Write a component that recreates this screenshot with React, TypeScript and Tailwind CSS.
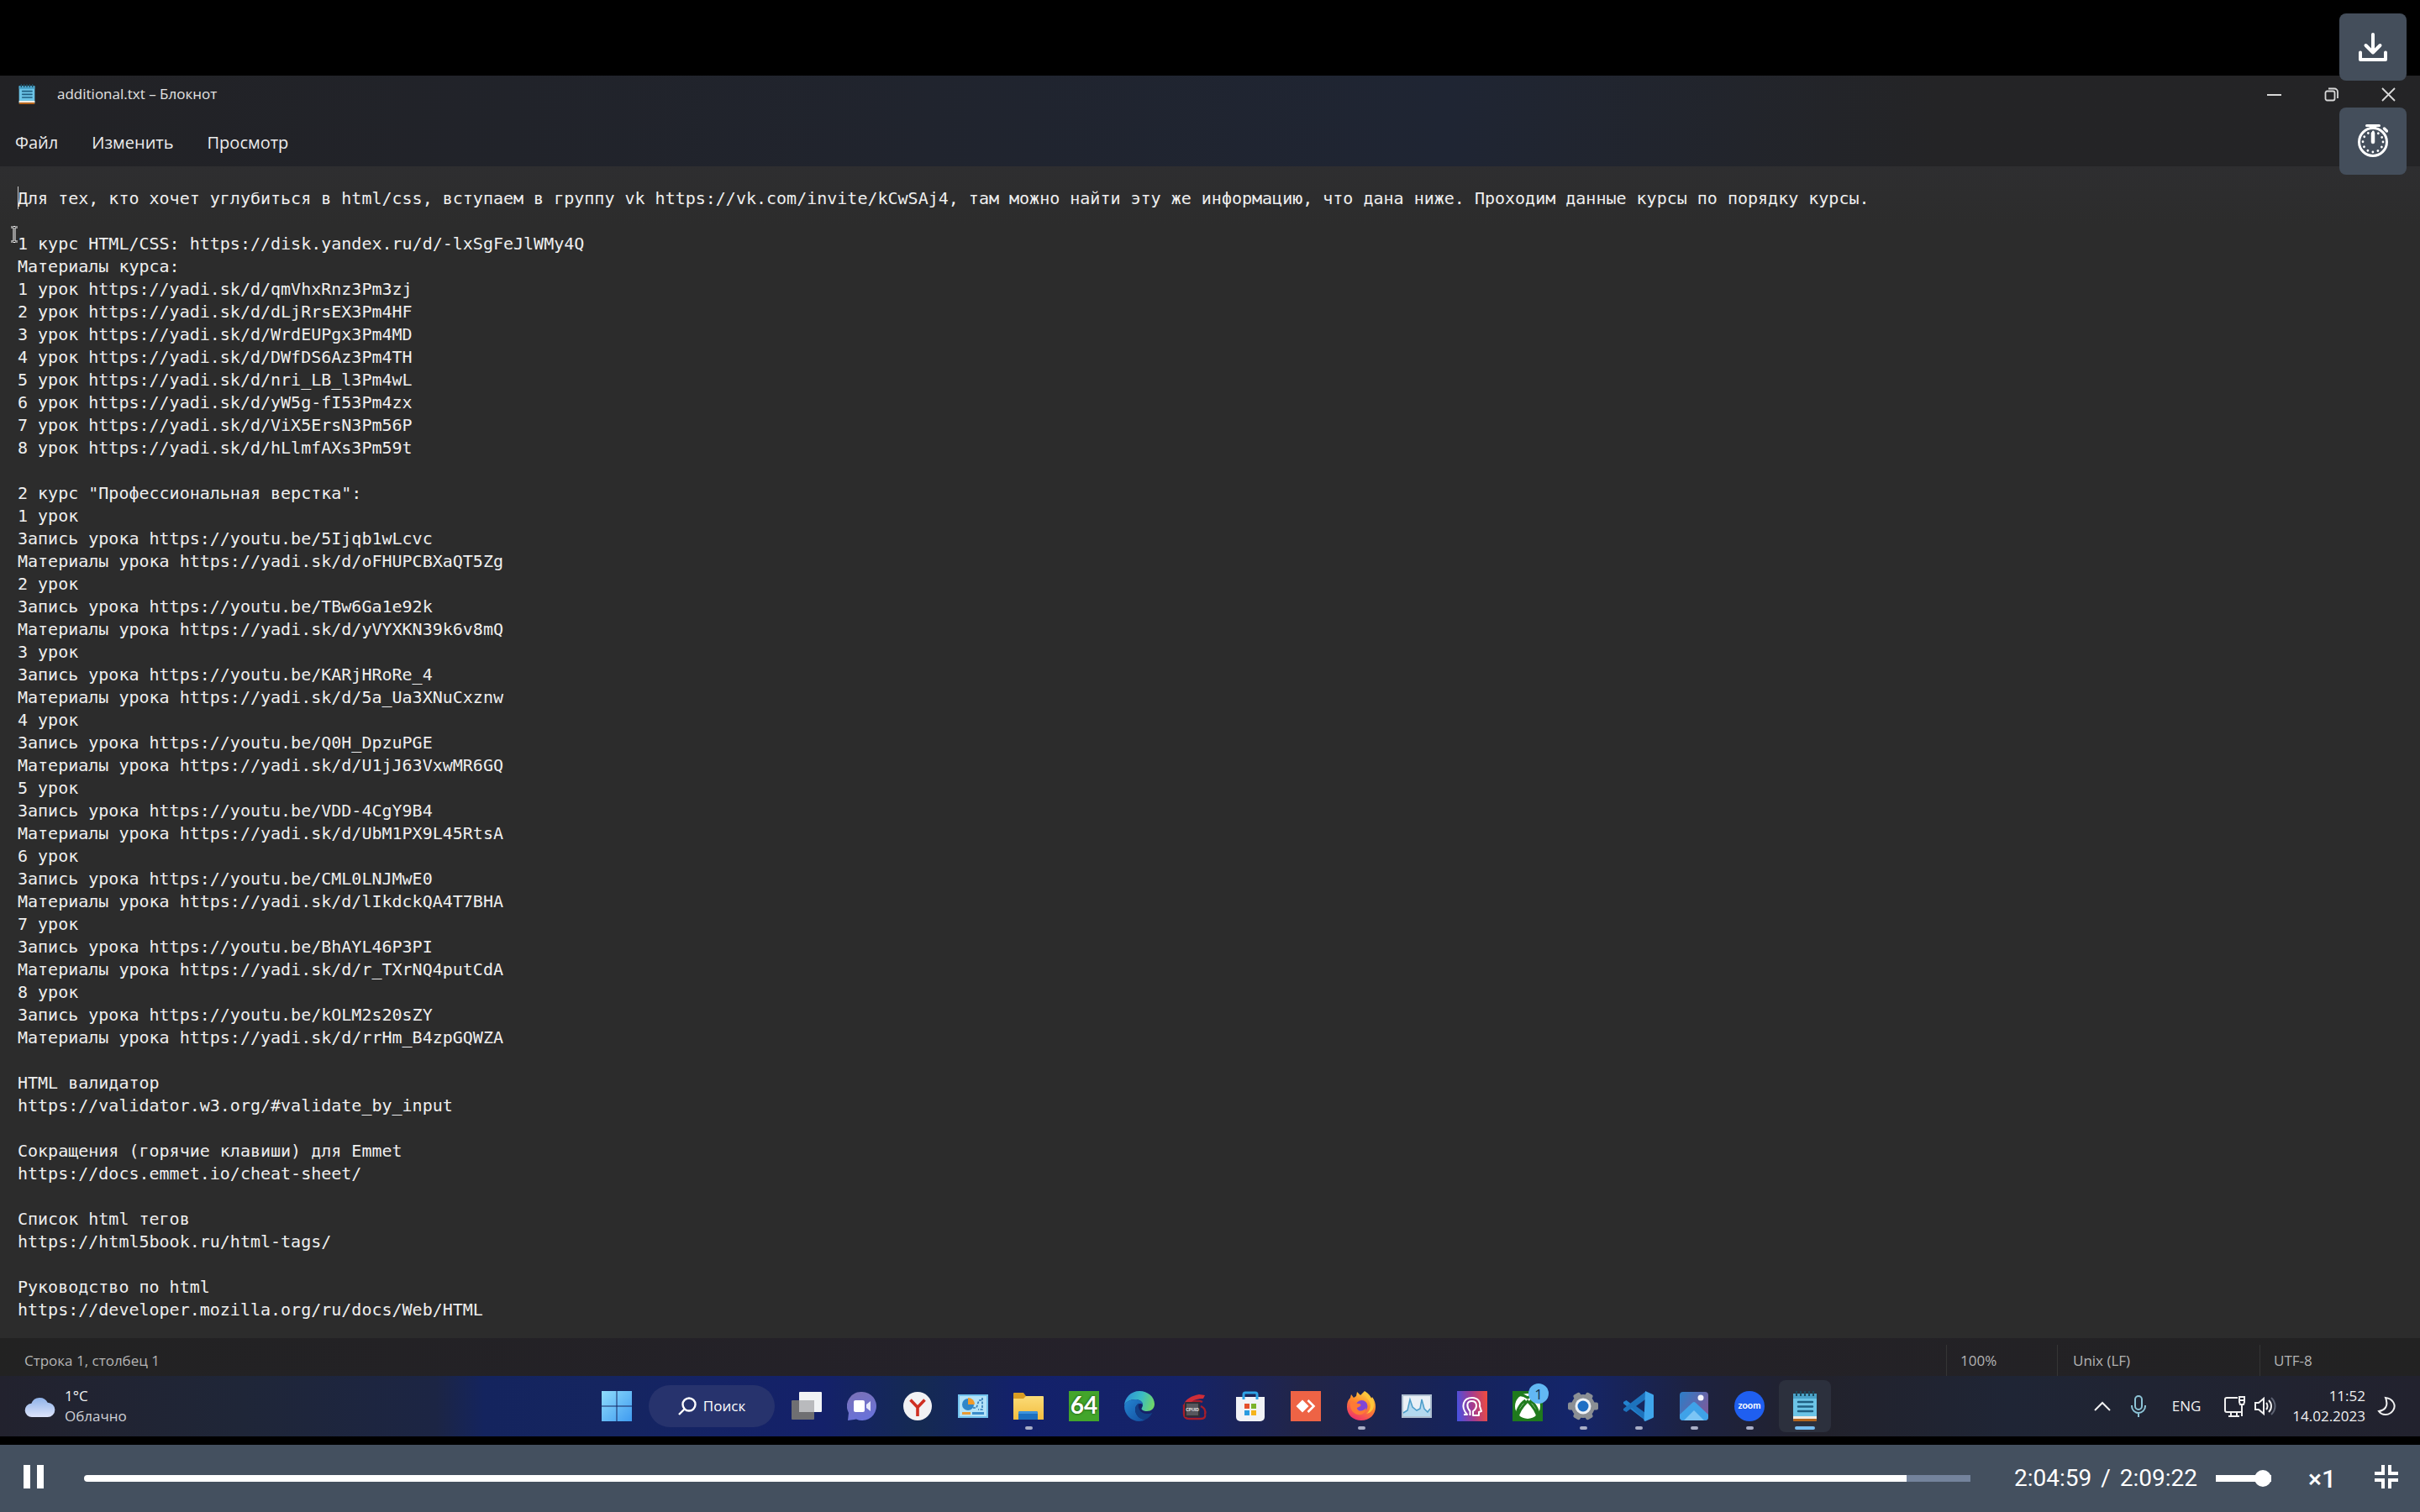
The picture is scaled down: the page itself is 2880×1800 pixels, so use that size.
import React from "react";

const NOTE = `Для тех, кто хочет углубиться в html/css, вступаем в группу vk https://vk.com/invite/kCwSAj4, там можно найти эту же информацию, что дана ниже. Проходим данные курсы по порядку курсы.

1 курс HTML/CSS: https://disk.yandex.ru/d/-lxSgFeJlWMy4Q
Материалы курса:
1 урок https://yadi.sk/d/qmVhxRnz3Pm3zj
2 урок https://yadi.sk/d/dLjRrsEX3Pm4HF
3 урок https://yadi.sk/d/WrdEUPgx3Pm4MD
4 урок https://yadi.sk/d/DWfDS6Az3Pm4TH
5 урок https://yadi.sk/d/nri_LB_l3Pm4wL
6 урок https://yadi.sk/d/yW5g-fI53Pm4zx
7 урок https://yadi.sk/d/ViX5ErsN3Pm56P
8 урок https://yadi.sk/d/hLlmfAXs3Pm59t

2 курс "Профессиональная верстка":
1 урок
Запись урока https://youtu.be/5Ijqb1wLcvc
Материалы урока https://yadi.sk/d/oFHUPCBXaQT5Zg
2 урок
Запись урока https://youtu.be/TBw6Ga1e92k
Материалы урока https://yadi.sk/d/yVYXKN39k6v8mQ
3 урок
Запись урока https://youtu.be/KARjHRoRe_4
Материалы урока https://yadi.sk/d/5a_Ua3XNuCxznw
4 урок
Запись урока https://youtu.be/Q0H_DpzuPGE
Материалы урока https://yadi.sk/d/U1jJ63VxwMR6GQ
5 урок
Запись урока https://youtu.be/VDD-4CgY9B4
Материалы урока https://yadi.sk/d/UbM1PX9L45RtsA
6 урок
Запись урока https://youtu.be/CML0LNJMwE0
Материалы урока https://yadi.sk/d/lIkdckQA4T7BHA
7 урок
Запись урока https://youtu.be/BhAYL46P3PI
Материалы урока https://yadi.sk/d/r_TXrNQ4putCdA
8 урок
Запись урока https://youtu.be/kOLM2s20sZY
Материалы урока https://yadi.sk/d/rrHm_B4zpGQWZA

HTML валидатор
https://validator.w3.org/#validate_by_input

Сокращения (горячие клавиши) для Emmet
https://docs.emmet.io/cheat-sheet/

Список html тегов
https://html5book.ru/html-tags/

Руководство по html
https://developer.mozilla.org/ru/docs/Web/HTML`;

function NotepadIcon({ className }: { className: string }) {
  return (
    <svg viewBox="0 0 36 36" className={className} aria-hidden="true">
      <rect x="4" y="3" width="28" height="33" rx="2" fill="#6cc4e6" />
      <rect x="4" y="3" width="28" height="6" fill="#4aa3c9" />
      <rect x="4" y="30" width="28" height="3" fill="#f3ece2" />
      <rect x="4" y="33" width="28" height="3" rx="1" fill="#b5651d" />
      <path d="M8 0v6M13 0v6M18 0v6M23 0v6M28 0v6" stroke="#1d4a5c" strokeWidth="2" />
      <path d="M10 13h17M10 18.500h17M10 24h17" stroke="#1f5f82" strokeWidth="2.400" strokeLinecap="round" />
    </svg>
  );
}

function TaskViewIcon() {
  return (
    <svg viewBox="0 0 36 36" className="size-9" aria-hidden="true">
      <rect x="0" y="11" width="27" height="23" rx="1" fill="#6f6f72" />
      <rect x="9" y="1" width="27" height="24" rx="1" fill="#f1f3f5" />
      <rect x="9" y="11" width="18" height="14" fill="#b9babd" />
    </svg>
  );
}

function ChatIcon() {
  return (
    <svg viewBox="0 0 36 36" className="size-9" aria-hidden="true">
      <defs>
        <linearGradient id="chat" x1="0" y1="0" x2="0.300" y2="1">
          <stop offset="0" stopColor="#7b71b5" />
          <stop offset="1" stopColor="#6a72d8" />
        </linearGradient>
      </defs>
      <path d="M18 1a17 17 0 1 1-7 32.500L1 35l1-9A17 17 0 0 1 18 1z" fill="url(#chat)" />
      <rect x="8" y="11" width="13" height="14" rx="2" fill="#fff" />
      <path d="M23 16l5-4v12l-5-4z" fill="#e4e6fa" />
    </svg>
  );
}

function YandexIcon() {
  return (
    <svg viewBox="0 0 36 36" className="size-9" aria-hidden="true">
      <circle cx="18" cy="18" r="17" fill="#f2f2f4" />
      <path d="M9.500 10.500L18 19.500l8.500-9M18 19v11" fill="none" stroke="#cf2f22" strokeWidth="3.600" />
    </svg>
  );
}

function ControlPanelIcon() {
  return (
    <svg viewBox="0 0 36 36" className="size-9" aria-hidden="true">
      <rect x="0" y="4" width="36" height="28" fill="#72c2ee" />
      <rect x="2" y="6" width="32" height="24" fill="#b3e2f8" />
      <circle cx="12" cy="16" r="7" fill="#2f86c9" />
      <path d="M12 16V8a8 8 0 0 1 8 8z" fill="#f09a2a" />
      <path d="M18 20h4l3-9h4M29 8v14h-5" fill="none" stroke="#2f78b5" strokeWidth="1.600" strokeDasharray="3 1.500" />
      <rect x="5" y="25" width="10" height="3" fill="#e89a35" />
      <rect x="17" y="25" width="14" height="3" fill="#3b8ccb" />
    </svg>
  );
}

function FolderIcon() {
  return (
    <svg viewBox="0 0 36 36" className="size-9" aria-hidden="true">
      <defs>
        <linearGradient id="folder" x1="0" y1="0" x2="0" y2="1">
          <stop offset="0" stopColor="#fbdc78" />
          <stop offset="1" stopColor="#f3bd3f" />
        </linearGradient>
      </defs>
      <path d="M0 3a1 1 0 0 1 1-1h11l3 4h9v6H0z" fill="#d99c22" />
      <path d="M0 9h12l3-3h20a1 1 0 0 1 1 1v27H0z" fill="url(#folder)" />
      <path d="M6 34V26a2 2 0 0 1 2-2h19a2 2 0 0 1 2 2v8z" fill="#1b6fc0" />
      <path d="M6 27v-1a2 2 0 0 1 2-2h19a2 2 0 0 1 2 2v1z" fill="#3b93dd" />
    </svg>
  );
}

function Aida64Icon() {
  return (
    <span className="flex size-9 items-center justify-center bg-[#43a52b] pb-1 font-['Lato'] text-[28px] leading-none font-bold text-white [text-shadow:0_0_3px_#123d0b]">
      64
    </span>
  );
}

function EdgeIcon() {
  return (
    <svg viewBox="0 0 36 36" className="size-9" aria-hidden="true">
      <defs>
        <linearGradient id="edgeTop" x1="0" y1="0.300" x2="1" y2="0.500">
          <stop offset="0" stopColor="#2c8fd8" />
          <stop offset="0.550" stopColor="#3bbcc4" />
          <stop offset="1" stopColor="#6fd668" />
        </linearGradient>
        <linearGradient id="edgeLow" x1="0" y1="0" x2="1" y2="1">
          <stop offset="0" stopColor="#2485d2" />
          <stop offset="1" stopColor="#134f9e" />
        </linearGradient>
      </defs>
      <path d="M18 0c10 0 18 7 18 15.500 0 5-4 8.500-9 8.500-4 0-6.500-1.500-6.500-3 0-1 1.500-2 1.500-4.500C22 12.500 18 10 13 10 7 10 1 13 0 18 0 8 8 0 18 0z" fill="url(#edgeTop)" />
      <path d="M0 18c1-5 7-8 13-8 5 0 9 2.500 9 6.500-3-3.500-9-.5-9 5.500 0 7 6 12 12 12-2 1-4.500 2-7 2C8 36 0 28 0 18z" fill="url(#edgeLow)" />
      <path d="M13 22c0-4 2-6.500 4.500-7.500C15 20 19 27 27 27c3 0 5-.5 6.500-1.500C32 29 29 32.500 25 34c-6 0-12-5-12-12z" fill="#123f86" />
    </svg>
  );
}

function CpuidIcon() {
  return (
    <svg viewBox="0 0 36 36" className="size-9" aria-hidden="true">
      <path d="M5 16v11c0 4 2 6 6 6h14c4 0 6-2 5-5M27 13c-4-2-9-1-13 0M25 18c5 2 6 6 5 10" fill="none" stroke="#a81e2a" strokeWidth="2.400" />
      <path d="M5 16c2-7 9-10 18-12l7 1-2 4c-6 0-10 1-14 4z" fill="#cf2d38" />
      <rect x="6" y="13" width="18" height="18" rx="1" fill="#2f2f35" />
      <rect x="8" y="15" width="14" height="14" fill="#57575d" />
      <text x="15" y="24" textAnchor="middle" fill="#e6e6e6" fontSize="5" fontWeight="700" fontFamily="Liberation Sans, sans-serif">CPUID</text>
    </svg>
  );
}

function StoreIcon() {
  return (
    <svg viewBox="0 0 36 36" className="size-9" aria-hidden="true">
      <path d="M1 7h34v24a5 5 0 0 1-5 5H6a5 5 0 0 1-5-5z" fill="#f1f2f6" />
      <path d="M10 10V4a2 2 0 0 1 2-2h12a2 2 0 0 1 2 2v6" fill="none" stroke="#2ea3e6" strokeWidth="3" />
      <rect x="11" y="15" width="6" height="6" fill="#e5502c" />
      <rect x="19" y="15" width="6" height="6" fill="#7cb32a" />
      <rect x="11" y="23" width="6" height="6" fill="#2b9be0" />
      <rect x="19" y="23" width="6" height="6" fill="#f5b41c" />
    </svg>
  );
}

function AnyDeskIcon() {
  return (
    <svg viewBox="0 0 36 36" className="size-9" aria-hidden="true">
      <rect width="36" height="36" fill="#ee6345" />
      <path d="M14 10.500l7.500 7.500-7.500 7.500L6.500 18z" fill="#fff" />
      <path d="M20.500 11l7 7-7 7" fill="none" stroke="#fff" strokeWidth="2.600" />
    </svg>
  );
}

function FirefoxIcon() {
  return (
    <svg viewBox="0 0 36 36" className="size-9" aria-hidden="true">
      <defs>
        <linearGradient id="fox" x1="0.800" y1="0" x2="0.300" y2="1">
          <stop offset="0" stopColor="#ffe14a" />
          <stop offset="0.450" stopColor="#ff8b2b" />
          <stop offset="1" stopColor="#ef2f6d" />
        </linearGradient>
      </defs>
      <path d="M22 0c5 3 7 6 8 9l1-2c3 4 4 8 4 12 0 9-7 16-17 16S1 28 1 19c0-5 1-8 4-11l1-4 3 4 3-2 1-5 4 4z" fill="url(#fox)" />
      <circle cx="18.500" cy="18" r="7" fill="#8046d8" />
      <path d="M5 13c4-2 6 2 10 2 2 0 3 1 2 3-1 1-4 1-4 3 2 4 8 3 11-1-1 7-6 9-10 8-6-1-10-7-9-15z" fill="#ff7a35" />
      <path d="M21 1c0 6 7 8 8 16 0 4-2 8-5 10 7-1 11-8 8-16-1-2-2-3-2-2-1-3-4-6-9-8z" fill="#ffc63a" />
    </svg>
  );
}

function MonitorIcon() {
  return (
    <svg viewBox="0 0 36 36" className="size-9" aria-hidden="true">
      <rect x="0" y="4" width="36" height="28" fill="#aebfd0" />
      <rect x="2" y="6" width="32" height="24" fill="#e9f0f6" />
      <path d="M2 26l5-3 3-13 3 9 5 4 4-2 2-11 3 11 4 4 3-4v9H2z" fill="#b4d9ef" />
      <path d="M2 26l5-3 3-13 3 9 5 4 4-2 2-11 3 11 4 4 3-4" fill="none" stroke="#4b9dca" strokeWidth="1.500" />
    </svg>
  );
}

function HeadIcon() {
  return (
    <svg viewBox="0 0 36 36" className="size-9" aria-hidden="true">
      <defs>
        <linearGradient id="head" x1="0" y1="0.400" x2="1" y2="0.300">
          <stop offset="0" stopColor="#4b50dd" />
          <stop offset="0.500" stopColor="#a53b8f" />
          <stop offset="1" stopColor="#ee4c3f" />
        </linearGradient>
      </defs>
      <rect width="36" height="36" fill="url(#head)" />
      <path d="M8 28h4C4 19 7 8 18 8c7 0 10 5 9 10l2 6-3 1v4h-7v-5c6-4 5-12-1.500-12S11 19 15.500 24v5" fill="none" stroke="#fff" strokeWidth="2" strokeLinejoin="round" />
    </svg>
  );
}

function XboxIcon() {
  return (
    <svg viewBox="0 0 36 36" className="size-9" aria-hidden="true">
      <rect width="36" height="36" fill="#1f7a1d" />
      <circle cx="18" cy="18" r="15" fill="#fff" />
      <path d="M8 5c4-1 7 1 10 3 3-2 6-4 10-3M6 32c1-8 7-15 12-20 5 5 11 12 12 20M15.500 11C9 15 4 24 5 31M20.500 11C27 15 32 24 31 31" fill="none" stroke="#1f7a1d" strokeWidth="3" />
    </svg>
  );
}

function SettingsIcon() {
  return (
    <svg viewBox="0 0 36 36" className="size-9" aria-hidden="true">
      <g fill="#8b8f94">
        <circle cx="18" cy="18" r="14" />
        <rect x="13.500" y="1" width="9" height="34" rx="2" transform="rotate(30 18 18)" />
        <rect x="13.500" y="0" width="9" height="36" rx="2" transform="rotate(90 18 18)" />
        <rect x="13.500" y="1" width="9" height="34" rx="2" transform="rotate(150 18 18)" />
      </g>
      <circle cx="18" cy="18" r="9.500" fill="#eef2f6" />
      <circle cx="18" cy="18" r="6.500" fill="#1f6fc4" />
    </svg>
  );
}

function CodeIcon() {
  return (
    <svg viewBox="0 0 36 36" className="size-9" aria-hidden="true">
      <path d="M26 1L10 16 3.500 11 0 13v2l26 20z" fill="#2383cf" />
      <path d="M26 35L10 20l-6.500 5L0 23v-2L26 1z" fill="#1d73bd" />
      <path d="M26 10L15 18l11 8z" fill="#17285f" />
      <path d="M26 0l9 4a2 2 0 0 1 1 2v24a2 2 0 0 1-1 2l-9 4c-1 0-1.500-1-1.500-1z" fill="#3fa6ec" />
    </svg>
  );
}

function PhotosIcon() {
  return (
    <svg viewBox="0 0 36 36" className="size-9" aria-hidden="true">
      <defs>
        <linearGradient id="photo" x1="0" y1="0" x2="1" y2="0.600">
          <stop offset="0" stopColor="#2b7ec9" />
          <stop offset="1" stopColor="#7a5b9c" />
        </linearGradient>
      </defs>
      <rect x="1" y="1" width="34" height="34" rx="4" fill="url(#photo)" />
      <circle cx="26" cy="8" r="3.500" fill="#f4f5fb" />
      <path d="M1 28l15-14a3 3 0 0 1 4 0l15 14v3a4 4 0 0 1-4 4H5a4 4 0 0 1-4-4z" fill="#3fa2e8" />
      <path d="M6 35l12-12 12 12z" fill="#7cc5f5" />
    </svg>
  );
}

function ZoomIcon() {
  return (
    <span className="flex size-9 items-center justify-center rounded-full bg-[#1f5ff0] pb-1 font-['Lato'] text-[11px] leading-none font-bold text-white">
      zoom
    </span>
  );
}

type Task = { name: string; icon: React.ReactNode; running?: boolean; active?: boolean; badge?: string };

const TASKS: Task[] = [
  { name: "Представление задач", icon: <TaskViewIcon /> },
  { name: "Чат", icon: <ChatIcon /> },
  { name: "Яндекс", icon: <YandexIcon /> },
  { name: "Панель управления", icon: <ControlPanelIcon /> },
  { name: "Проводник", icon: <FolderIcon />, running: true },
  { name: "AIDA64", icon: <Aida64Icon /> },
  { name: "Edge", icon: <EdgeIcon /> },
  { name: "CPUID", icon: <CpuidIcon /> },
  { name: "Store", icon: <StoreIcon /> },
  { name: "AnyDesk", icon: <AnyDeskIcon /> },
  { name: "Firefox", icon: <FirefoxIcon />, running: true },
  { name: "Монитор", icon: <MonitorIcon /> },
  { name: "Профиль", icon: <HeadIcon /> },
  { name: "Xbox", icon: <XboxIcon />, badge: "1" },
  { name: "Параметры", icon: <SettingsIcon />, running: true },
  { name: "Code", icon: <CodeIcon />, running: true },
  { name: "Фотографии", icon: <PhotosIcon />, running: true },
  { name: "Zoom", icon: <ZoomIcon />, running: true },
  { name: "Блокнот", icon: <NotepadIcon className="size-9" />, active: true },
];

function TitleBar() {
  return (
    <header className="bg-linear-to-r from-[#222225] via-[#1f2533] via-60% to-[#242426] to-80%">
      <div className="flex h-11 items-center pl-5">
        <NotepadIcon className="size-6" />
        <h1 className="ml-6 flex-1 text-[17px] text-[#e2e2e2]">additional.txt – Блокнот</h1>
        <div className="mr-[29px] flex items-center gap-[51px] text-[#d8d8d8]">
          <button aria-label="Свернуть">
            <svg viewBox="0 0 17 17" className="size-[17px]"><path d="M0 9h17" stroke="currentColor" strokeWidth="2" /></svg>
          </button>
          <button aria-label="Восстановить">
            <svg viewBox="0 0 17 17" className="size-[17px]" fill="none" stroke="currentColor" strokeWidth="1.800">
              <rect x="1.500" y="4.500" width="11" height="11" rx="2" />
              <path d="M5 1.500h7a4 4 0 0 1 4 4V13" />
            </svg>
          </button>
          <button aria-label="Закрыть">
            <svg viewBox="0 0 17 17" className="size-[17px]"><path d="M1 1l15 15M16 1L1 16" stroke="currentColor" strokeWidth="1.800" /></svg>
          </button>
        </div>
      </div>
      <nav className="flex h-16 items-center gap-10 pt-2 pl-[18px] text-[20px] text-[#ececec]">
        <button>Файл</button>
        <button>Изменить</button>
        <button>Просмотр</button>
      </nav>
    </header>
  );
}

function StatusBar() {
  return (
    <footer className="flex h-[45px] bg-linear-to-r from-[#222222] via-[#25212b] to-[#222222] text-[17px] text-[#b4b4b4]">
      <div className="flex flex-1 items-center pt-2 pl-[29px]">Строка 1, столбец 1</div>
      <div className="mt-2 flex w-[132px] items-center border-l border-[#353535] pl-4">100%</div>
      <div className="mt-2 flex w-[241px] items-center border-l border-[#353535] pl-[18px]">Unix (LF)</div>
      <div className="mt-2 flex w-[191px] items-center border-l border-[#353535] pl-4">UTF-8</div>
    </footer>
  );
}

function Taskbar() {
  return (
    <div className="grid h-[72px] grid-cols-[1fr_auto_1fr] items-center bg-[linear-gradient(90deg,#22222e_0%,#1f2638_10%,#1c2544_18%,#14245e_20%,#152560_25%,#14216a_34%,#152a52_38%,#13216b_42%,#152368_49%,#222547_54%,#16235a_60%,#14256a_65%,#1d2240_70%,#22222c_75%,#1f2535_83%,#22222e_100%)] text-[17px] text-[#f0f0f0]">
      <button className="flex items-center gap-[10px] pl-[29px] text-left leading-6">
        <svg viewBox="0 0 38 28" className="h-[27px] w-[38px]" aria-hidden="true">
          <defs>
            <linearGradient id="cloud" x1="0" y1="0" x2="0" y2="1">
              <stop offset="0" stopColor="#8fb2e8" />
              <stop offset="1" stopColor="#dde4fb" />
            </linearGradient>
          </defs>
          <path d="M9 27a8.500 8.500 0 0 1-1-17A11 11 0 0 1 28 9a9 9 0 0 1 0 18z" fill="url(#cloud)" />
        </svg>
        <span>
          1°C
          <br />
          <span className="text-[#cfd0d6]">Облачно</span>
        </span>
      </button>

      <div className="flex h-full items-center pl-[2px]">
        <button aria-label="Пуск" className="flex w-[66px] justify-center">
          <svg viewBox="0 0 36 36" className="size-9" aria-hidden="true">
            <defs>
              <linearGradient id="win" x1="0" y1="0" x2="1" y2="1">
                <stop offset="0" stopColor="#8fdcfc" />
                <stop offset="1" stopColor="#3f9bf0" />
              </linearGradient>
            </defs>
            <path d="M0 0h17.500v17.500H0zM18.500 0H36v17.500H18.500zM0 18.500h17.500V36H0zM18.500 18.500H36V36H18.500z" fill="url(#win)" />
          </svg>
        </button>
        <button className="mx-[5px] flex h-[50px] w-[150px] items-center justify-center gap-2 rounded-full bg-[#27336d] text-[17px] text-white">
          <svg viewBox="0 0 22 22" className="size-[22px]" fill="none" stroke="currentColor" strokeWidth="2.400" aria-hidden="true">
            <circle cx="13" cy="9" r="7.500" />
            <path d="M7.500 14.500L1 21" />
          </svg>
          Поиск
        </button>
        {TASKS.map((t) => (
          <button
            key={t.name}
            aria-label={t.name}
            className={
              t.active
                ? "relative mx-[2px] flex h-[62px] w-[62px] items-center justify-center rounded-lg bg-[#2c303d]"
                : "relative flex h-[62px] w-[66px] items-center justify-center"
            }
          >
            {t.icon}
            {t.badge && (
              <span className="absolute top-1 right-2 flex size-6 items-center justify-center rounded-full bg-[#62b8f4] text-[17px] leading-none text-[#14304a]">
                {t.badge}
              </span>
            )}
            {t.running && <span className="absolute bottom-[3px] h-1 w-[9px] rounded-full bg-[#a9aec6]" />}
            {t.active && <span className="absolute bottom-[3px] h-1 w-6 rounded-full bg-[#76bdf2]" />}
          </button>
        ))}
      </div>

      <div className="flex items-center justify-end pr-[29px]">
        <button aria-label="Скрытые значки" className="mr-6">
          <svg viewBox="0 0 20 12" className="h-3 w-5" fill="none" stroke="currentColor" strokeWidth="2"><path d="M1 11l9-9 9 9" /></svg>
        </button>
        <button aria-label="Микрофон" className="mr-[31px] text-[#8cc3d6]">
          <svg viewBox="0 0 18 26" className="h-[26px] w-[18px]" fill="none" stroke="currentColor" strokeWidth="2">
            <rect x="5" y="1" width="8" height="16" rx="4" />
            <path d="M1 12v1a8 8 0 0 0 16 0v-1M9 21v5" />
          </svg>
        </button>
        <button className="mr-7">ENG</button>
        <button aria-label="Сеть и звук" className="mr-[19px] flex items-center gap-[10px]">
          <svg viewBox="0 0 26 26" className="size-[26px]" fill="none" stroke="currentColor" strokeWidth="2" aria-hidden="true">
            <path d="M16 3H3a2 2 0 0 0-2 2v13a2 2 0 0 0 2 2h17M8 20v4M15 20v4M5 25h13M21 11v14" />
            <path d="M18 2h6v6l-1 3h-4l-1-3zM18 6h6" />
          </svg>
          <svg viewBox="0 0 26 26" className="size-[26px]" fill="none" stroke="currentColor" strokeWidth="2" aria-hidden="true">
            <path d="M1 9h4l6-5v18l-6-5H1zM14 9c2 2 2 6 0 8M17 6c4 4 4 10 0 14" />
            <path d="M20 3c6 6 6 14 0 20" stroke="#5d6272" />
          </svg>
        </button>
        <time className="text-right leading-6">
          11:52
          <br />
          14.02.2023
        </time>
        <button aria-label="Не беспокоить" className="ml-[14px]">
          <svg viewBox="0 0 22 24" className="h-6 w-[22px]" fill="none" stroke="currentColor" strokeWidth="2">
            <path d="M10 2c9 1 13 9 9 15-4 6-13 7-17 1 7-1 12-6 8-16z" />
          </svg>
        </button>
      </div>
    </div>
  );
}

function Player() {
  const duration = 7762;
  const current = 7499;
  const share = (current / duration) * 100;
  return (
    <div className="flex h-20 items-center bg-[#44505f] pl-7 text-[28px] text-white">
      <button aria-label="Пауза" className="flex gap-2 pb-1">
        <span className="h-7 w-2 bg-white" />
        <span className="h-7 w-2 bg-white" />
      </button>
      <input
        type="range"
        aria-label="Позиция"
        max={duration}
        defaultValue={current}
        style={{ backgroundImage: `linear-gradient(90deg,#fff ${share}%,#74839c ${share}%)` }}
        className="ml-12 h-2 min-w-0 flex-1 appearance-none rounded-l-full [&::-webkit-slider-thumb]:size-2 [&::-webkit-slider-thumb]:appearance-none [&::-webkit-slider-thumb]:rounded-full [&::-webkit-slider-thumb]:bg-white"
      />
      <div className="ml-[52px] flex gap-[11px]">
        <span>2:04:59</span>
        <span>/</span>
        <span>2:09:22</span>
      </div>
      <input
        type="range"
        aria-label="Громкость"
        defaultValue={100}
        className="ml-[22px] h-5 w-[66px] appearance-none bg-transparent [&::-webkit-slider-runnable-track]:h-2 [&::-webkit-slider-runnable-track]:bg-white [&::-webkit-slider-thumb]:-mt-[6px] [&::-webkit-slider-thumb]:size-5 [&::-webkit-slider-thumb]:appearance-none [&::-webkit-slider-thumb]:rounded-full [&::-webkit-slider-thumb]:bg-white"
      />
      <button className="ml-11 w-9 text-left text-[30px] font-medium">×1</button>
      <button aria-label="Выйти из полноэкранного режима" className="mr-[26px] ml-[43px] pb-1">
        <svg viewBox="0 0 28 28" className="size-7" fill="none" stroke="currentColor" strokeWidth="4" aria-hidden="true">
          <path d="M0 10h10V0M18 0v10h10M28 18H18v10M10 28V18H0" />
        </svg>
      </button>
    </div>
  );
}

export default function App() {
  return (
    <main className="relative flex h-screen flex-col bg-black font-['Roboto',sans-serif]">
      <section className="mt-[90px] mb-[10px] flex flex-1 flex-col bg-[#2c2c2c] font-['Open_Sans',sans-serif]">
        <TitleBar />
        <div className="relative flex flex-1 bg-linear-to-b from-[#2e2e30] to-[#2c2c2c] to-5%">
          <textarea
            aria-label="Текст документа"
            spellCheck={false}
            wrap="off"
            defaultValue={NOTE}
            className="flex-1 resize-none overflow-hidden bg-transparent px-[21px] pt-[25px] font-['DejaVu_Sans_Mono',monospace] text-[20px] leading-[27px] text-[#efefef] outline-none"
          />
          <span className="absolute top-6 left-[21px] h-[27px] w-px bg-[#c8c8c8]" />
          <svg viewBox="0 0 10 20" className="absolute top-[71px] left-3 h-5 w-[10px]" fill="none" aria-hidden="true">
            <path d="M1 1h3l1 1 1-1h3M5 2v16M1 19h3l1-1 1 1h3" stroke="#fff" strokeWidth="3" />
            <path d="M1 1h3l1 1 1-1h3M5 2v16M1 19h3l1-1 1 1h3" stroke="#222" strokeWidth="1" />
          </svg>
        </div>
        <StatusBar />
        <Taskbar />
      </section>
      <Player />

      <div className="absolute top-4 right-4 flex flex-col gap-8 text-white">
        <button aria-label="Скачать" className="flex size-20 items-center justify-center rounded-lg bg-[#444e5b]">
          <svg viewBox="0 0 34 34" className="size-[34px]" fill="none" stroke="currentColor" strokeWidth="4" strokeLinecap="round" strokeLinejoin="round" aria-hidden="true">
            <path d="M17 2v21M8.500 15l8.500 8.500 8.500-8.500M2 23.500V32h30v-8.500" />
          </svg>
        </button>
        <button aria-label="Таймер" className="flex size-20 items-center justify-center rounded-lg bg-[#444e5b]">
          <svg viewBox="0 0 36 40" className="h-10 w-9" fill="none" stroke="currentColor" aria-hidden="true">
            <circle cx="18" cy="21" r="16.500" strokeWidth="3" />
            <circle cx="18" cy="21" r="12" strokeWidth="2.800" strokeLinecap="round" strokeDasharray="0.010 6.273" />
            <path d="M10.500 1.500h15" strokeWidth="3" strokeLinecap="round" />
            <path d="M14 2.500h8v3h-8z" fill="currentColor" stroke="none" />
            <path d="M31.500 5l3 3" strokeWidth="3.400" strokeLinecap="round" />
            <path d="M18 8l2 2v11a2 2 0 0 1-4 0V10z" fill="currentColor" strokeWidth="0.500" />
          </svg>
        </button>
      </div>
    </main>
  );
}
